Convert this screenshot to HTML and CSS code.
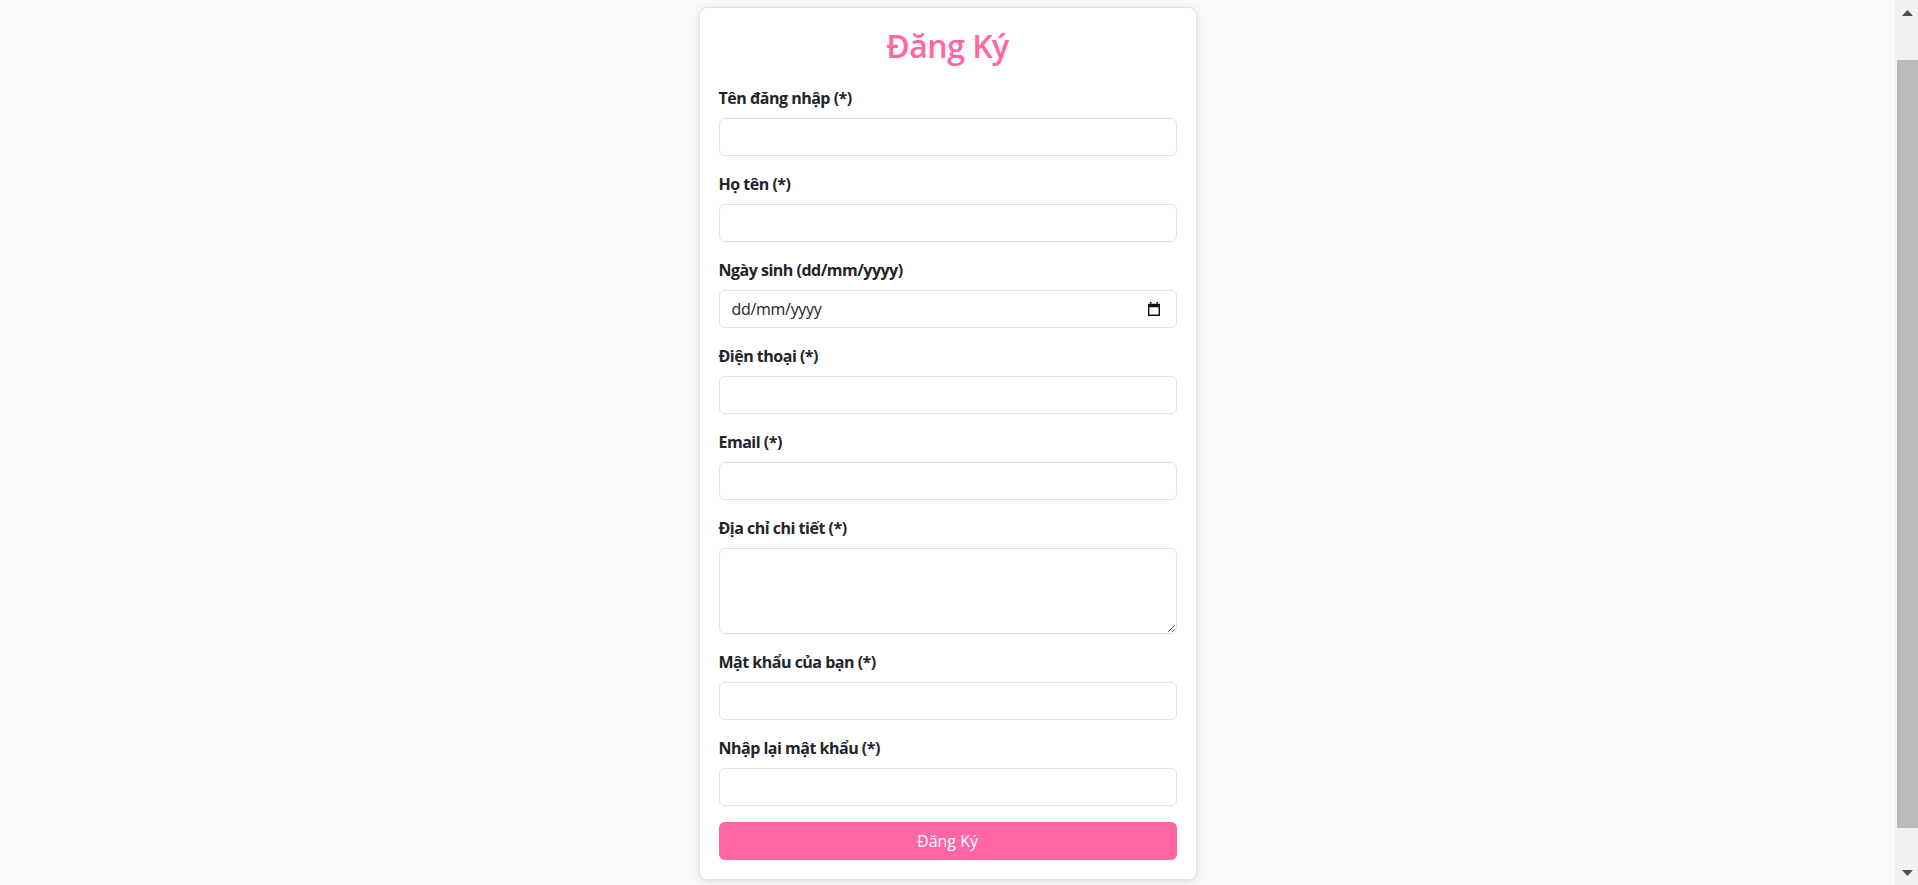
FILE: index.html
```html
<!DOCTYPE html>
<html lang="vi">
<head>
<meta charset="utf-8">
<title>Đăng Ký</title>
<link rel="stylesheet" href="styles.css">
</head>
<body>
<div class="viewport">
  <main class="page">
    <div class="card">
      <h2 class="title">Đăng Ký</h2>
      <form class="form">
        <div class="group">
          <label class="label">Tên đăng nhập (*)</label>
          <input class="control" type="text">
        </div>
        <div class="group">
          <label class="label">Họ tên (*)</label>
          <input class="control" type="text">
        </div>
        <div class="group">
          <label class="label">Ngày sinh (dd/mm/yyyy)</label>
          <div class="control date">
            <span class="date-text">dd/mm/yyyy</span>
            <svg class="cal" width="14" height="14" viewBox="0 0 14 14"><path fill="#111" fill-rule="evenodd" d="M3 0h1.6v2H3z M9.4 0H11v2H9.4z M1 1.8h12V14H1z M2.4 5.2v7.4h9.2V5.2z"/></svg>
          </div>
        </div>
        <div class="group">
          <label class="label">Điện thoại (*)</label>
          <input class="control" type="text">
        </div>
        <div class="group">
          <label class="label">Email (*)</label>
          <input class="control" type="text">
        </div>
        <div class="group">
          <label class="label">Địa chỉ chi tiết (*)</label>
          <textarea class="control area" rows="3"></textarea>
        </div>
        <div class="group">
          <label class="label">Mật khẩu của bạn (*)</label>
          <input class="control" type="password">
        </div>
        <div class="group">
          <label class="label">Nhập lại mật khẩu (*)</label>
          <input class="control" type="password">
        </div>
        <button class="btn" type="button">Đăng Ký</button>
      </form>
    </div>
  </main>
  <div class="scrollbar">
    <div class="sb-btn"><svg width="11" height="6" viewBox="0 0 11 6"><polygon points="5.5,0 11,6 0,6" fill="#505050"/></svg></div>
    <div class="sb-track"><div class="sb-thumb"></div></div>
    <div class="sb-btn"><svg width="11" height="6" viewBox="0 0 11 6"><polygon points="0,0 11,0 5.5,6" fill="#505050"/></svg></div>
  </div>
</div>
</body>
</html>
```
FILE: styles.css
```css
* { box-sizing: border-box; }
html, body { margin: 0; padding: 0; height: 885px; overflow: hidden; }
body {
  font-family: "Open Sans", "Noto Sans", sans-serif;
  font-size: 16px;
  line-height: 1.5;
  color: #212529;
  background: #f8f9fa;
}
.viewport { display: flex; height: 885px; }
.page {
  flex: 1;
  display: flex;
  justify-content: center;
  align-items: flex-start;
  padding-top: 7px;
}
.card {
  width: 498px;
  background: #fff;
  border: 1px solid #dee2e6;
  border-radius: 8px;
  padding: 19px 19px 19px;
  box-shadow: 0 2px 8px rgba(0,0,0,0.10);
}
.title {
  margin: 0 0 21px;
  text-align: center;
  font-size: 32px;
  line-height: 38px;
  font-weight: 600;
  color: #ff66a3;
  letter-spacing: -0.5px;
}
.form { display: flex; flex-direction: column; }
.group { display: flex; flex-direction: column; margin-bottom: 16px; }
.label {
  font-weight: 700;
  font-size: 16px;
  line-height: 24px;
  margin-bottom: 8px;
  letter-spacing: -0.5px;
}
.control {
  display: block;
  width: 100%;
  height: 38px;
  padding: 6px 12px;
  font-family: inherit;
  font-size: 16px;
  line-height: 24px;
  color: #212529;
  background: #fff;
  border: 1px solid #dee2e6;
  border-radius: 6px;
  outline: none;
}
.date { display: flex; align-items: center; justify-content: space-between; }
.date-text { letter-spacing: -0.3px; }
.cal { margin-right: 3px; }
.area { height: 86px; resize: vertical; }
.btn {
  height: 38px;
  width: 100%;
  border: none;
  border-radius: 6px;
  background: #ff66a3;
  color: #fff;
  font-family: inherit;
  font-size: 16px;
  line-height: 24px;
  padding: 6px 12px;
}
.scrollbar {
  width: 23px;
  background: #f1f1f1;
  display: flex;
  flex-direction: column;
}
.sb-btn {
  height: 25px;
  display: flex;
  align-items: center;
  justify-content: center;
  padding-left: 2px;
}
.sb-track { flex: 1; padding: 35px 0 32px 2px; display: flex; }
.sb-thumb { flex: 1; background: #bababa; }
```
